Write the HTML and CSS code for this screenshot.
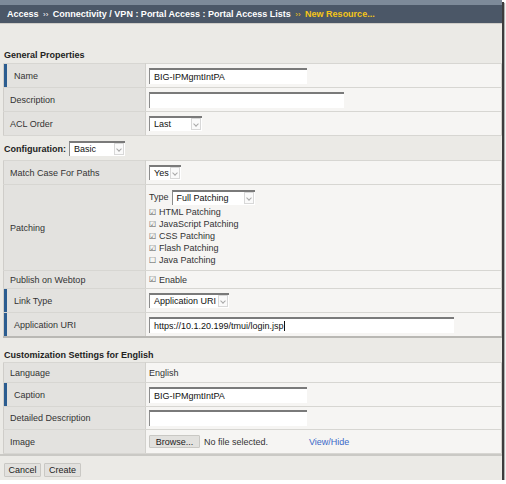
FILE: index.html
```html
<!DOCTYPE html>
<html lang="en">
  <head>
    <meta charset="UTF-8" />
    <title>New Resource</title>
    <link rel="stylesheet" href="styles.css">
  </head>
  <body>
    <div class="page">
      <div class="crumbs">
        Access <span class="sep">&rsaquo;&rsaquo;</span> Connectivity / VPN : Portal Access : Portal Access Lists
        <span class="current"><span class="sep">&rsaquo;&rsaquo;</span> New Resource...</span>
      </div>

      <div class="section-title first">General Properties</div>
      <table class="props">
        <tr class="h24">
          <td class="label req">Name</td>
          <td class="value"><span class="input w158">BIG-IPMgmtIntPA</span></td>
        </tr>
        <tr class="h24">
          <td class="label">Description</td>
          <td class="value"><span class="input w195"></span></td>
        </tr>
        <tr class="h24">
          <td class="label">ACL Order</td>
          <td class="value"><span class="select w53"><span class="sel-text">Last</span><span class="sel-btn"></span></span></td>
        </tr>
      </table>

      <div class="config">
        <strong>Configuration:</strong>
        <span class="select w56"><span class="sel-text">Basic</span><span class="sel-btn"></span></span>
      </div>
      <table class="props closed">
        <tr class="h24">
          <td class="label">Match Case For Paths</td>
          <td class="value"><span class="select w31"><span class="sel-text">Yes</span><span class="sel-btn"></span></span></td>
        </tr>
        <tr class="h86">
          <td class="label">Patching</td>
          <td class="value">
            <div class="type-line">
              Type <span class="select w83"><span class="sel-text">Full Patching</span><span class="sel-btn"></span></span>
            </div>
            <div class="check"><span class="box">&#9745;</span>HTML Patching</div>
            <div class="check"><span class="box">&#9745;</span>JavaScript Patching</div>
            <div class="check"><span class="box">&#9745;</span>CSS Patching</div>
            <div class="check"><span class="box">&#9745;</span>Flash Patching</div>
            <div class="check"><span class="box">&#9744;</span>Java Patching</div>
          </td>
        </tr>
        <tr class="h18">
          <td class="label">Publish on Webtop</td>
          <td class="value"><div class="check"><span class="box">&#9745;</span>Enable</div></td>
        </tr>
        <tr class="h24">
          <td class="label req">Link Type</td>
          <td class="value"><span class="select w80"><span class="sel-text">Application URI</span><span class="sel-btn"></span></span></td>
        </tr>
        <tr class="h24">
          <td class="label req">Application URI</td>
          <td class="value"><span class="input w305">https://10.1.20.199/tmui/login.jsp<span class="caret"></span></span></td>
        </tr>
      </table>

      <div class="section-title">Customization Settings for English</div>
      <table class="props">
        <tr class="h20">
          <td class="label">Language</td>
          <td class="value">English</td>
        </tr>
        <tr class="h24">
          <td class="label req">Caption</td>
          <td class="value"><span class="input w158">BIG-IPMgmtIntPA</span></td>
        </tr>
        <tr class="h23">
          <td class="label">Detailed Description</td>
          <td class="value"><span class="input w158"></span></td>
        </tr>
        <tr class="h24">
          <td class="label">Image</td>
          <td class="value">
            <div class="file-line">
              <button class="btn browse">Browse...</button>
              <span class="no-file">No file selected.</span>
              <a class="link" href="#">View/Hide</a>
            </div>
          </td>
        </tr>
      </table>

      <div class="footer">
        <button class="btn">Cancel</button>
        <button class="btn">Create</button>
      </div>
    </div>
  </body>
</html>
```

FILE: styles.css
```css
body {
  margin: 0;
  background-color: #fff;
  font-family: "Liberation Sans", Arial, sans-serif;
  font-size: 9px;
  color: #222;
}

.page {
  width: 502px;
  height: 480px;
  background-color: #ebeae6;
  box-shadow: 2px 2px 0 #3c3c3c, 3px 3px 1px #b0b0b0;
  overflow: hidden;
}

.crumbs {
  height: 18px;
  line-height: 18px;
  border-top: 5px solid #7d8a99;
  border-bottom: 1px solid #cfcdc8;
  background-color: #4b5767;
  color: #fff;
  font-weight: bold;
  padding-left: 7px;
  white-space: nowrap;
}

.crumbs .sep {
  font-weight: normal;
  font-size: 8px;
  padding: 0 2px;
}

.crumbs .current {
  color: #f6c518;
}

.section-title {
  font-weight: bold;
  line-height: 13px;
  padding: 11px 4px 0;
}

.section-title.first {
  line-height: 14px;
  padding-top: 24px;
  padding-bottom: 1px;
}

.props {
  width: 499px;
  margin-left: 3px;
  border-collapse: collapse;
  border: 1px solid #cfcdc9;
}

.props.closed {
  border-bottom: 2px solid #b9b8b4;
}

.props td {
  padding: 0;
  border-top: 1px solid #d7d6d2;
  border-bottom: 1px solid #d7d6d2;
  vertical-align: middle;
  color: #333;
}

.h24 td { height: 23px; }
.h23 td { height: 22px; }
.h20 td { height: 19px; }
.h18 td { height: 17px; }
.h86 td { height: 85px; }

.props .label {
  width: 135px;
  padding-left: 6px;
  background-color: #e3e2df;
  border-right: 1px solid #d2d1cd;
}

.props .label.req {
  padding-left: 10px;
  width: 131px;
  box-shadow: inset 3px 0 0 #2c5d90;
}

.props .value {
  padding-left: 3px;
  background-color: #f6f5f3;
}

.input {
  display: inline-flex;
  align-items: center;
  box-sizing: border-box;
  height: 16px;
  padding-left: 4px;
  background-color: #fff;
  border-top: 2px solid #7a7a7a;
  border-left: 1px solid #8c8c8c;
  color: #111;
  vertical-align: middle;
}

.caret {
  width: 1px;
  height: 10px;
  background-color: #111;
}

.w158 { width: 158px; }
.w195 { width: 195px; }
.w305 { width: 305px; }
.w31 { width: 32px; }
.w53 { width: 53px; }
.w56 { width: 56px; }
.w80 { width: 80px; }
.w83 { width: 83px; }

.select {
  display: inline-flex;
  box-sizing: border-box;
  height: 15px;
  background-color: #fff;
  border-top: 2px solid #7a7a7a;
  border-left: 1px solid #8c8c8c;
  color: #111;
  vertical-align: middle;
}

.sel-text {
  flex: 1;
  padding-left: 4px;
  line-height: 12px;
  overflow: hidden;
  white-space: nowrap;
}

.sel-btn {
  width: 8px;
  margin: 0 1px 1px 0;
  border: 1px solid #d8d8d8;
  background: #fafafa;
  position: relative;
}

.sel-btn::after {
  content: "";
  position: absolute;
  left: 2px;
  top: 3px;
  width: 3px;
  height: 3px;
  border-right: 1px solid #a8a8a8;
  border-bottom: 1px solid #a8a8a8;
  transform: rotate(45deg);
}

.config {
  display: flex;
  align-items: center;
  gap: 3px;
  height: 24px;
  padding: 1px 0 0 4px;
  box-sizing: border-box;
}

.config strong {
  font-size: 9px;
}

.type-line {
  display: flex;
  align-items: center;
  gap: 3px;
  height: 16px;
  margin-bottom: 1px;
}

.check {
  display: flex;
  align-items: center;
  height: 12px;
}

.check .box {
  flex: 0 0 10px;
  font-family: "DejaVu Sans", sans-serif;
  font-size: 8px;
  color: #555;
}

.file-line {
  display: flex;
  align-items: center;
}

.btn {
  font-family: "Liberation Sans", Arial, sans-serif;
  font-size: 9px;
  color: #222;
  height: 14px;
  padding: 0 5px;
  border: 1px solid #c9c8c4;
  border-radius: 1px;
  background-color: #e2e1de;
}

.browse {
  width: 51px;
  height: 13px;
}

.no-file {
  margin-left: 4px;
  width: 105px;
}

.link {
  color: #3a68c8;
  text-decoration: none;
}

.footer {
  display: flex;
  gap: 3px;
  padding: 7px 0 0 4px;
  border-top: 2px solid #cac9c5;
  width: 499px;
}

.footer .btn {
  width: 37px;
  padding: 0;
}
```
